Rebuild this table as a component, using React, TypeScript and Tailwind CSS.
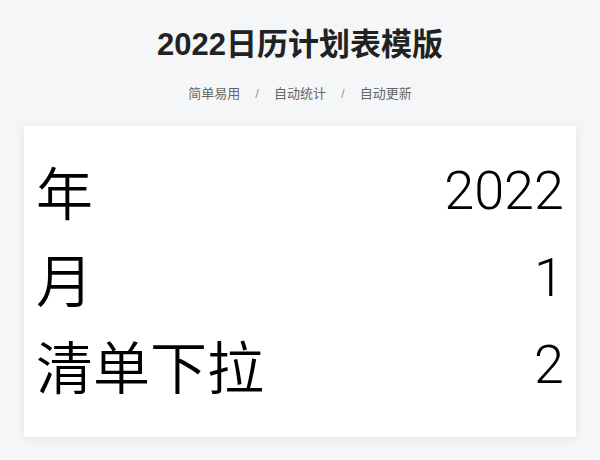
const rows = [
  { label: "年", value: "2022" },
  { label: "月", value: "1" },
  { label: "清单下拉", value: "2" },
];

const tags = ["简单易用", "自动统计", "自动更新"];

export default function App() {
  return (
    <div
      className="min-h-[460px] w-[600px] bg-[#f5f6f8] px-6 pt-[25px]"
      style={{ fontFamily: '"Liberation Sans", "Noto Sans CJK SC", sans-serif' }}
    >
      <h1 className="text-center text-[31px] font-bold leading-[40px] text-[#222]">
        2022日历计划表模版
      </h1>
      <div className="mt-[20px] flex items-center justify-center text-[13px] leading-[18px] text-[#666]">
        {tags.map((t, i) => (
          <span key={t} className="flex items-center">
            {i > 0 && <span className="mx-[15px] text-[#999]">/</span>}
            {t}
          </span>
        ))}
      </div>
      <div className="mt-[23px] bg-white px-3 pt-[21px] pb-[29px] shadow-[0_2px_10px_rgba(0,0,0,0.08)]">
        {rows.map((r) => (
          <div
            key={r.label}
            className="flex h-[87px] items-center justify-between text-black"
          >
            <span
              className="text-[57px] leading-none font-[350]"
              style={{ fontFamily: '"Noto Sans CJK SC", sans-serif' }}
            >
              {r.label}
            </span>
            <span
              className="text-[54px] leading-none font-light"
              style={{ fontFamily: 'Roboto, "Liberation Sans", sans-serif' }}
            >
              {r.value}
            </span>
          </div>
        ))}
      </div>
    </div>
  );
}
